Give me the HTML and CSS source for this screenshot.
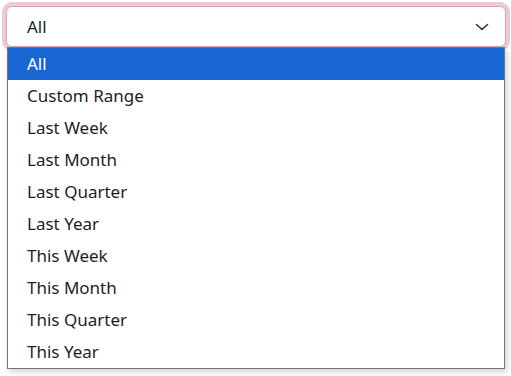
FILE: index.html
```html
<!DOCTYPE html>
<html>
<head>
<meta charset="utf-8">
<link rel="stylesheet" href="styles.css">
</head>
<body>
<div class="wrap">
  <div class="select">
    <span class="value">All</span>
    <svg class="chev" width="14" height="8" viewBox="0 0 14 8"><path d="M1.5 1.5 L7 6.5 L12.5 1.5" fill="none" stroke="#333" stroke-width="1.6" stroke-linecap="round" stroke-linejoin="round"/></svg>
  </div>
  <ul class="list">
    <li class="opt active">All</li>
    <li class="opt">Custom Range</li>
    <li class="opt">Last Week</li>
    <li class="opt">Last Month</li>
    <li class="opt">Last Quarter</li>
    <li class="opt">Last Year</li>
    <li class="opt">This Week</li>
    <li class="opt">This Month</li>
    <li class="opt">This Quarter</li>
    <li class="opt">This Year</li>
  </ul>
</div>
</body>
</html>
```
FILE: styles.css
```css
html, body {
  margin: 0;
  padding: 0;
  background: #fff;
}
body {
  font-family: "Noto Sans", "Open Sans", sans-serif;
  font-size: 17px;
  color: #1e1e1e;
}
.wrap {
  padding: 6px 5px 8px 6px;
}
.select {
  box-sizing: border-box;
  height: 41px;
  border: 1px solid #d6a3b4;
  border-radius: 6px;
  box-shadow: 0 0 0 4px #ecc9d3;
  background: #fff;
  display: flex;
  align-items: center;
  justify-content: space-between;
  padding: 0 16px 0 20px;
}
.value {
  line-height: 1;
}
.chev {
  display: block;
}
.list {
  position: relative;
  z-index: 2;
  margin: 0 1px 0 1px;
  padding: 0;
  list-style: none;
  background: #fff;
  border: 1px solid #767676;
  box-shadow: 2px 3px 6px rgba(0,0,0,0.18);
}
.opt {
  height: 32px;
  line-height: 32px;
  padding-left: 19px;
}
.opt.active {
  background: #1967d2;
  color: #fff;
}
```
